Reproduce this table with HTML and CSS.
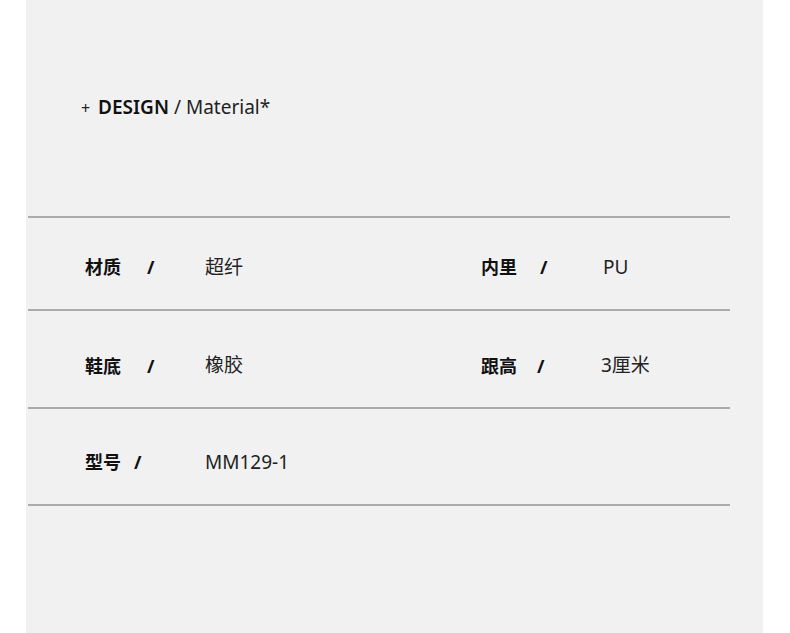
FILE: index.html
```html
<!DOCTYPE html>
<html lang="zh">
<head>
<meta charset="utf-8">
<link rel="stylesheet" href="styles.css">
</head>
<body>
<div class="panel">
  <div class="title"><span class="plus">+</span> <b>DESIGN</b> / Material*</div>
  <div class="specs">
    <div class="row">
      <div class="cell"><span class="k">材质<i class="s s1">/</i></span><span class="v">超纤</span></div>
      <div class="cell"><span class="k">内里<i class="s s2">/</i></span><span class="v">PU</span></div>
    </div>
    <div class="row row2">
      <div class="cell"><span class="k">鞋底<i class="s s1">/</i></span><span class="v">橡胶</span></div>
      <div class="cell"><span class="k">跟高<i class="s s3">/</i></span><span class="v v2">3厘米</span></div>
    </div>
    <div class="row row3">
      <div class="cell"><span class="k">型号<i class="s s4">/</i></span><span class="v">MM129-1</span></div>
    </div>
  </div>
</div>
</body>
</html>
```
FILE: styles.css
```css
html, body { margin: 0; padding: 0; background: #fff; }
body {
  font-family: "Noto Sans", "Noto Sans CJK SC", sans-serif;
  color: #111;
}
.panel {
  margin-left: 26px;
  width: 737px;
  height: 633px;
  background: #f1f1f1;
  padding-top: 94px;
  box-sizing: border-box;
}
.title {
  padding-left: 55px;
  font-size: 19px;
  line-height: 26px;
  color: #222;
}
.title .plus { font-size: 16px; margin-right: 3px; }
.title b { font-weight: 600; color: #111; }
.specs {
  margin-top: 95px;
  margin-left: 2px;
  width: 702px;
  border-top: 2px solid #ababab;
}
.row {
  display: grid;
  grid-template-columns: 396px 1fr;
  padding-left: 57px;
  padding-top: 6px;
  height: 93px;
  box-sizing: border-box;
  align-items: center;
  border-bottom: 2px solid #ababab;
}
.row2 { height: 98px; padding-top: 12px; }
.row3 { height: 97px; padding-top: 10px; }
.cell { display: flex; align-items: center; font-size: 19px; line-height: 24px; }
.k {
  width: 120px;
  flex: none;
  font-family: "Noto Sans CJK SC", sans-serif;
  font-weight: 600;
  font-size: 18px;
  color: #111;
}
.s { font-style: normal; font-family: "Noto Sans", sans-serif; font-weight: 700; display: inline-block; }
.s1 { margin-left: 26px; }
.s2 { margin-left: 23px; }
.s3 { margin-left: 20px; }
.s4 { margin-left: 13px; }
.v {
  font-family: "Noto Sans", "Noto Sans CJK SC", sans-serif;
  font-weight: 400;
  color: #222;
}
.cell:nth-child(2) .v { margin-left: 2px; }
.cell:nth-child(2) .v2 { margin-left: 0; }
```
